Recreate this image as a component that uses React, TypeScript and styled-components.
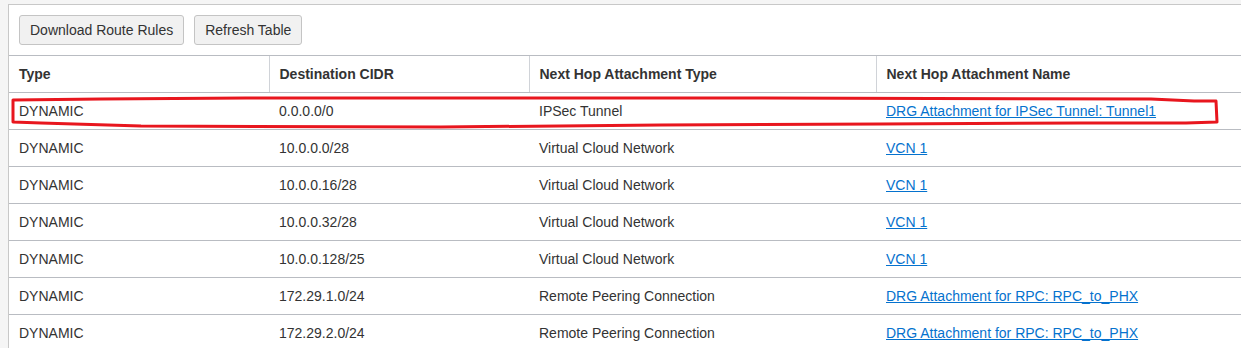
import { FunctionComponent } from 'react'
import styled, { createGlobalStyle } from 'styled-components'

const GlobalStyle = createGlobalStyle`
  html, body {
    margin: 0;
    padding: 0;
    background: #f5f5f5;
    font-family: 'Liberation Sans', Arial, sans-serif;
    color: #333;
  }
`

interface RouteRule {
  type: string
  cidr: string
  hopType: string
  hopName: string
}

const rules: RouteRule[] = [
  { type: 'DYNAMIC', cidr: '0.0.0.0/0', hopType: 'IPSec Tunnel', hopName: 'DRG Attachment for IPSec Tunnel: Tunnel1' },
  { type: 'DYNAMIC', cidr: '10.0.0.0/28', hopType: 'Virtual Cloud Network', hopName: 'VCN 1' },
  { type: 'DYNAMIC', cidr: '10.0.0.16/28', hopType: 'Virtual Cloud Network', hopName: 'VCN 1' },
  { type: 'DYNAMIC', cidr: '10.0.0.32/28', hopType: 'Virtual Cloud Network', hopName: 'VCN 1' },
  { type: 'DYNAMIC', cidr: '10.0.0.128/25', hopType: 'Virtual Cloud Network', hopName: 'VCN 1' },
  { type: 'DYNAMIC', cidr: '172.29.1.0/24', hopType: 'Remote Peering Connection', hopName: 'DRG Attachment for RPC: RPC_to_PHX' },
  { type: 'DYNAMIC', cidr: '172.29.2.0/24', hopType: 'Remote Peering Connection', hopName: 'DRG Attachment for RPC: RPC_to_PHX' }
]

const Page = styled.div`
  padding: 4px 0 0 8px;
  height: 344px;
  overflow: hidden;
`

const Panel = styled.div`
  position: relative;
  background: #fff;
  border-top: 1px solid #c8c8c8;
  border-left: 1px solid #c8c8c8;
  height: 400px;
`

const Toolbar = styled.div`
  display: flex;
  gap: 10px;
  padding: 10px 0 10px 10px;
`

const Button = styled.button`
  height: 30px;
  padding: 0 10px;
  font-family: 'Liberation Sans', Arial, sans-serif;
  font-size: 14px;
  color: #333;
  background: #f1f1f1;
  border: 1px solid #c4c4c4;
  border-radius: 3px;
`

const Table = styled.table`
  width: 100%;
  border-collapse: collapse;
  table-layout: fixed;
  font-size: 14px;
`

const HeadCell = styled.th<{ $width?: number }>`
  box-sizing: border-box;
  width: ${p => (p.$width ? `${p.$width}px` : 'auto')};
  height: 37px;
  padding: 0 10px;
  text-align: left;
  font-weight: bold;
  color: #333;
  border-top: 1px solid #b9bcc2;
  border-bottom: 1px solid #b9bcc2;
  border-left: 1px solid #d0d3d8;
  &:first-child {
    border-left: none;
  }
`

const Cell = styled.td`
  box-sizing: border-box;
  height: 37px;
  padding: 0 10px;
  color: #333;
  border-bottom: 1px solid #b9bcc2;
`

const Link = styled.a`
  color: #0572ce;
  text-decoration: underline;
  cursor: pointer;
`

const Marker = styled.svg`
  position: absolute;
  left: -8px;
  top: -4px;
  pointer-events: none;
`

const App: FunctionComponent = () => {
  return (
    <Page>
      <GlobalStyle />
      <Panel>
        <Toolbar>
          <Button>Download Route Rules</Button>
          <Button>Refresh Table</Button>
        </Toolbar>
        <Table>
          <thead>
            <tr>
              <HeadCell $width={260}>Type</HeadCell>
              <HeadCell $width={260}>Destination CIDR</HeadCell>
              <HeadCell $width={347}>Next Hop Attachment Type</HeadCell>
              <HeadCell>Next Hop Attachment Name</HeadCell>
            </tr>
          </thead>
          <tbody>
            {rules.map((r, i) => (
              <tr key={i}>
                <Cell>{r.type}</Cell>
                <Cell>{r.cidr}</Cell>
                <Cell>{r.hopType}</Cell>
                <Cell>
                  <Link>{r.hopName}</Link>
                </Cell>
              </tr>
            ))}
          </tbody>
        </Table>
        <Marker width='1241' height='348' viewBox='0 0 1241 348'>
          <path
            d='M12 99 L100 98 L245 97 L720 97 L1150 98 L1193 100 L1215 100 L1216 121 L1185 122 L1080 122 L880 123 L660 124 L440 126 L140 125 L40 122 L12 121 Z'
            fill='none'
            stroke='#e8161e'
            strokeWidth='3'
            strokeLinejoin='round'
          />
        </Marker>
      </Panel>
    </Page>
  )
}

export default App
